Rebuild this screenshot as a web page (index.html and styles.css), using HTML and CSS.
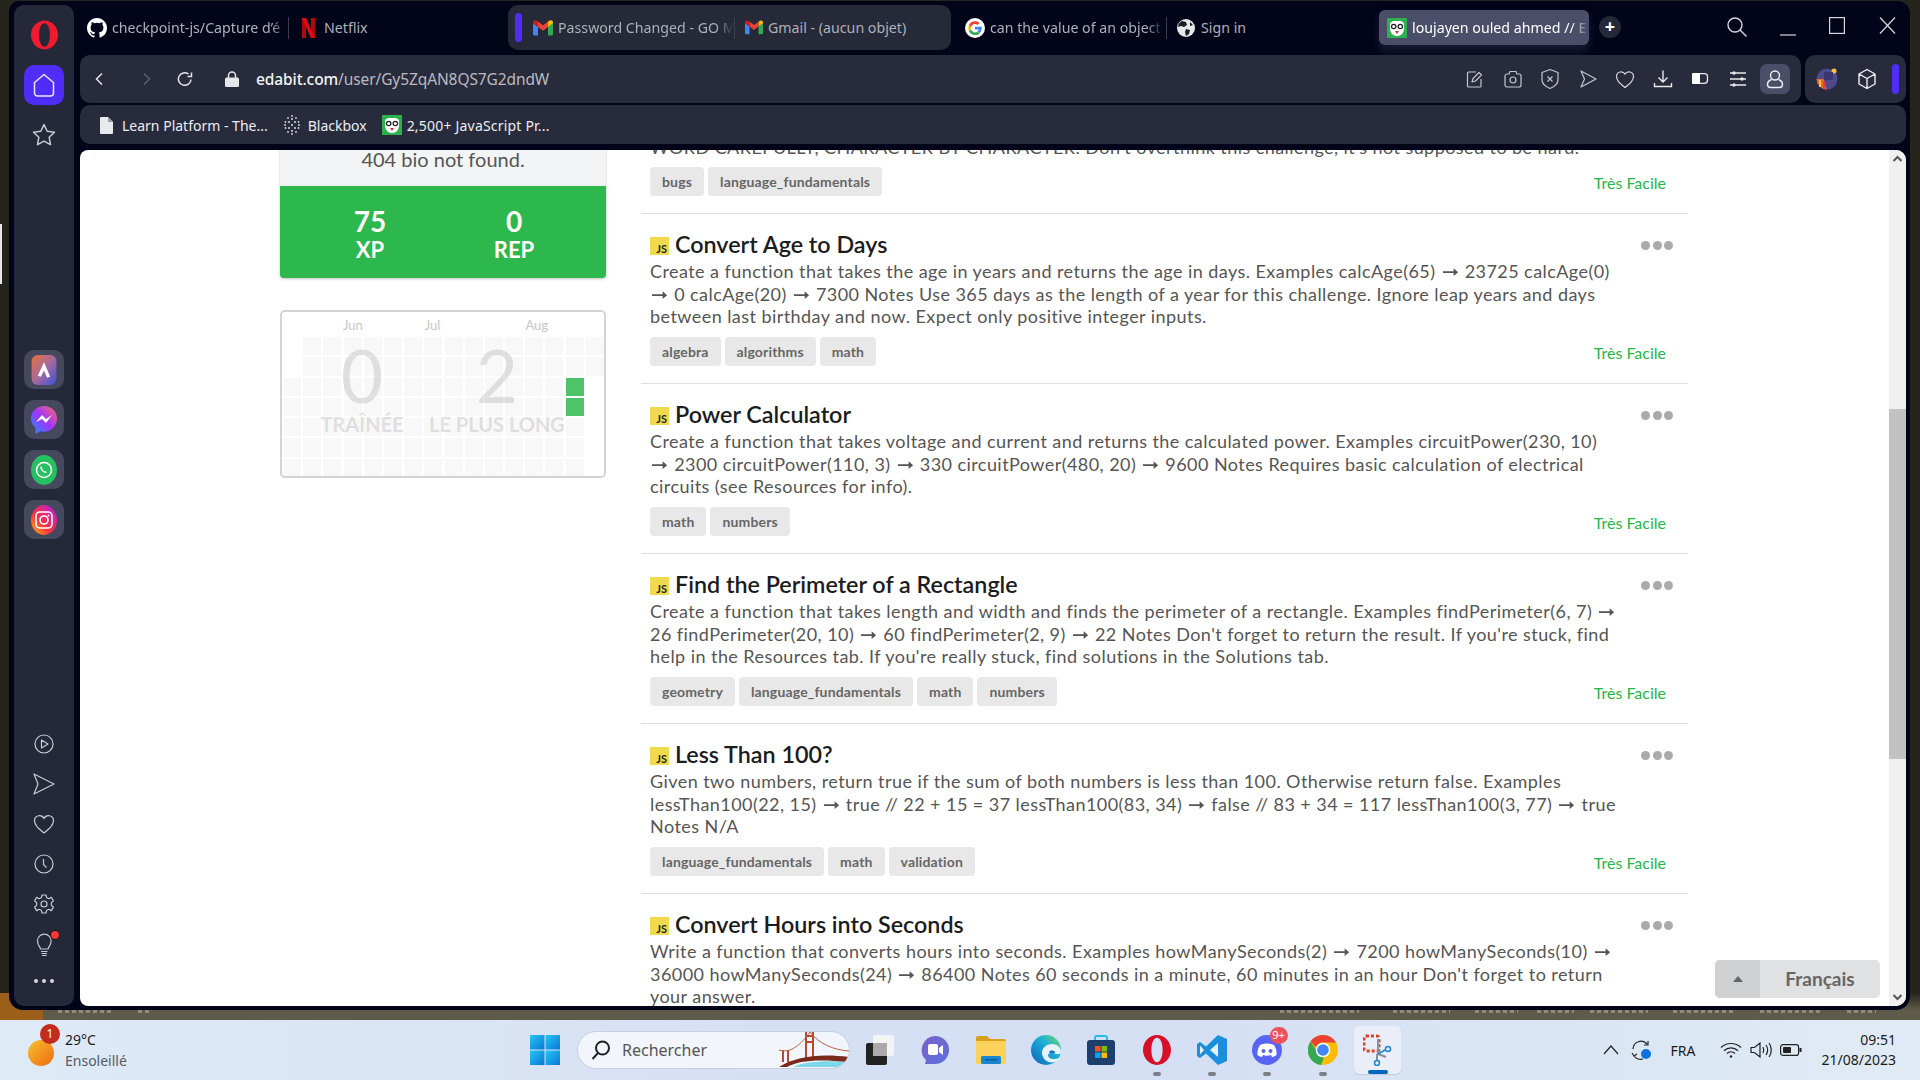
FILE: index.html
```html
<!DOCTYPE html>
<html lang="fr">
<head>
<meta charset="utf-8">
<title>loujayen ouled ahmed // Edabit</title>
<link rel="stylesheet" href="styles.css">
</head>
<body>
<svg class="sprite" width="0" height="0" aria-hidden="true">
  <defs>
    <symbol id="gmail" viewBox="0 0 20 16">
      <path d="M1.500 15.500H5V7L0 3.300V14a1.500 1.500 0 0 0 1.500 1.500z" fill="#4285f4"/>
      <path d="M15 15.500h3.500A1.500 1.500 0 0 0 20 14V3.300L15 7z" fill="#34a853"/>
      <path d="M15 1.500V7l5-3.700V2.300C20 .6 18 -.4 16.700.6z" fill="#fbbc04"/>
      <path d="M5 7V1.500l5 3.800 5-3.800V7l-5 3.800z" fill="#ea4335"/>
      <path d="M0 2.300v1L5 7V1.500L3.300.6C2 -.4 0 .6 0 2.300z" fill="#c5221f"/>
    </symbol>
    <symbol id="edabit" viewBox="0 0 20 20">
      <rect width="20" height="20" fill="#2bb24c"/>
      <path d="M3 5l3-2h8l3 2 0 5c0 5-3 8-7 8s-7-3-7-8z" fill="#fff"/>
      <circle cx="6.700" cy="8.500" r="2.800" fill="#222"/><circle cx="13.300" cy="8.500" r="2.800" fill="#222"/>
      <circle cx="6.700" cy="8.500" r="1.500" fill="#fff"/><circle cx="13.300" cy="8.500" r="1.500" fill="#fff"/>
      <path d="M8 13h4l-2 3z" fill="#c33"/>
    </symbol>
    <symbol id="opera" viewBox="0 0 30 32">
      <path fill-rule="evenodd" d="M15 0C6.700 0 0 7.200 0 16s6.700 16 15 16 15-7.200 15-16S23.300 0 15 0zm0 3c3.700 0 6 5.800 6 13s-2.300 13-6 13-6-5.800-6-13 2.300-13 6-13z"/>
    </symbol>
  </defs>
</svg>

<main class="desktop">
  <div class="wall-orange"></div>
  <div class="wall-marker"></div>
  <div class="status-left"><i></i><i></i></div>
  <div class="status-right"><i></i><i></i><i></i><i></i><i></i><i></i><i></i><i></i></div>

  <div class="window">
    <aside class="sidebar">
      <svg class="op-logo" width="27" height="30"><use href="#opera" fill="#f01a2e"/></svg>
      <div class="home"><svg width="26" height="26" viewBox="0 0 26 26" fill="none" stroke="#e8e8ff" stroke-width="1.500"><path d="M3.500 10.500 13 2.500l9.500 8V21a3 3 0 0 1-3 3h-13a3 3 0 0 1-3-3z" stroke-linejoin="round"/></svg></div>
      <svg class="star" width="28" height="28" viewBox="0 0 28 28" fill="none" stroke="#c8cad2" stroke-width="1.500" stroke-linejoin="round"><path d="M14 3.500l3.200 6.700 7.300 1-5.300 5.100 1.300 7.300-6.500-3.500-6.500 3.500 1.300-7.300L3.500 11.200l7.300-1z"/></svg>

      <div class="apps">
        <div class="app"><svg width="24" height="29" viewBox="0 0 24 29"><defs><linearGradient id="ar" x1="0" y1="0" x2="1" y2="1"><stop offset="0" stop-color="#e8703a"/><stop offset=".5" stop-color="#a56a9c"/><stop offset="1" stop-color="#3d4fe0"/></linearGradient></defs><rect width="24" height="29" rx="6" fill="url(#ar)"/><path d="M12 7l6 14-3 1-3-7-3 6-3-1z" fill="#fff"/></svg></div>
        <div class="app"><svg width="26" height="30" viewBox="0 0 26 30"><defs><linearGradient id="ms" x1="0" y1="1" x2="1" y2="0"><stop offset="0" stop-color="#1f8fff"/><stop offset=".5" stop-color="#a033ff"/><stop offset="1" stop-color="#ff6968"/></linearGradient></defs><path d="M13 1C6 1 0 6.500 0 13.500c0 3.700 1.700 7 4.400 9.200V29l5-2.700c1.200.3 2.400.5 3.600.5 7 0 13-5.900 13-13.300S20 1 13 1z" fill="url(#ms)"/><path d="M5 17l6-7 4 4 6-4-6 8-4-4z" fill="#fff"/></svg></div>
        <div class="app"><svg width="26" height="30" viewBox="0 0 26 30"><ellipse cx="13" cy="15" rx="13" ry="15" fill="#25c05f"/><circle cx="13" cy="15" r="7.500" fill="none" stroke="#fff" stroke-width="1.600"/><path d="M10 11c-1 1-1 3 1 5s4 2.500 5 1.500l-1.500-1.500-1 .5-2.500-2.500.5-1z" fill="#fff"/></svg></div>
        <div class="app"><svg width="26" height="30" viewBox="0 0 26 30"><defs><linearGradient id="ig" x1="0" y1="1" x2="1" y2="0"><stop offset="0" stop-color="#ffc107"/><stop offset=".4" stop-color="#f5333f"/><stop offset=".75" stop-color="#d6249f"/><stop offset="1" stop-color="#6a2ee8"/></linearGradient></defs><ellipse cx="13" cy="15" rx="13" ry="15" fill="url(#ig)"/><rect x="5" y="7" width="16" height="16" rx="4" fill="none" stroke="#fff" stroke-width="1.600"/><circle cx="13" cy="15" r="4" fill="none" stroke="#fff" stroke-width="1.600"/><circle cx="17.500" cy="10.500" r="1" fill="#fff"/></svg></div>
      </div>

      <div class="side-tools">
        <svg width="24" height="24" viewBox="0 0 24 24" fill="none" stroke="#c8cad2" stroke-width="1.200"><circle cx="12" cy="12" r="9"/><path d="M9.500 8l6.500 4-6.500 4z" stroke-linejoin="round"/></svg>
        <svg width="24" height="24" viewBox="0 0 24 24" fill="none" stroke="#c8cad2" stroke-width="1.200" stroke-linejoin="round"><path d="M2 2l20 10-20 10 4-10z"/></svg>
        <svg width="24" height="24" viewBox="0 0 24 24" fill="none" stroke="#c8cad2" stroke-width="1.200"><path d="M12 21C6 16 2.500 13 2.500 8.500A5 5 0 0 1 12 6.500 5 5 0 0 1 21.500 8.500C21.500 13 18 16 12 21z" stroke-linejoin="round"/></svg>
        <svg width="24" height="24" viewBox="0 0 24 24" fill="none" stroke="#c8cad2" stroke-width="1.200"><circle cx="12" cy="12" r="9"/><path d="M11.500 7v5.500l3 3"/></svg>
        <svg width="24" height="24" viewBox="0 0 24 24" fill="none" stroke="#c8cad2" stroke-width="1.200" stroke-linejoin="round"><circle cx="12" cy="12" r="3"/><path d="M10 3h4l.6 2.700 2.300 1 2.500-1.300 2 3.400-2 1.800v2.800l2 1.800-2 3.400-2.500-1.300-2.300 1L14 21h-4l-.6-2.700-2.300-1-2.500 1.300-2-3.400 2-1.800v-2.800l-2-1.800 2-3.400 2.500 1.300 2.300-1z"/></svg>
        <div class="bulb"><svg width="24" height="26" viewBox="0 0 24 26" fill="none" stroke="#c8cad2" stroke-width="1.200"><path d="M8.500 17c0-2-3-3.500-3-8a6.800 6.800 0 0 1 13.600 0c0 4.500-3 6-3 8z"/><path d="M9 19.500h6.500M9.500 21.500h5.500M10 23.500h4.500"/></svg><i class="bulb-dot"></i></div>
        <div class="more"><i></i><i></i><i></i></div>
      </div>
    </aside>

    <div class="browser">
      <div class="tabs">
        <div class="tab t-github">
          <svg width="20" height="20" viewBox="0 0 16 16" fill="#fff"><path d="M8 0C3.580 0 0 3.580 0 8c0 3.540 2.290 6.530 5.470 7.590.4.070.55-.17.55-.38v-1.340c-2.230.48-2.690-1.080-2.690-1.080-.36-.92-.89-1.170-.89-1.170-.73-.5.050-.49.050-.49.800.06 1.230.83 1.230.83.710 1.220 1.870.87 2.330.66.070-.52.280-.87.510-1.070-1.780-.2-3.640-.89-3.640-3.950 0-.87.310-1.590.820-2.150-.08-.2-.36-1.020.08-2.120 0 0 .67-.21 2.200.82a7.700 7.700 0 0 1 4 0c1.530-1.040 2.200-.82 2.200-.82.440 1.100.16 1.920.08 2.120.51.560.82 1.270.82 2.150 0 3.070-1.870 3.750-3.650 3.950.290.250.540.730.540 1.480v2.200c0 .21.150.46.550.38A8 8 0 0 0 16 8c0-4.420-3.580-8-8-8z"/></svg>
          <span class="tab-label">checkpoint-js/Capture d’é</span>
        </div>
        <div class="tab t-netflix">
          <svg width="13" height="20" viewBox="0 0 13 20"><path d="M0 0h4v20l-4 .5z" fill="#b1060f"/><path d="M9 0h4v20.500l-4-.5z" fill="#b1060f"/><path d="M0 0h4l9 20.500-4-.5z" fill="#e50914"/></svg>
          <span class="tab-label plain">Netflix</span>
        </div>
        <div class="group">
          <i class="group-bar"></i>
          <div class="tab t-gm1"><svg width="20" height="16"><use href="#gmail"/></svg><span class="tab-label">Password Changed - GO M</span></div>
          <div class="tab t-gm2"><svg width="18" height="15"><use href="#gmail"/></svg><span class="tab-label plain">Gmail - (aucun objet)</span></div>
        </div>
        <div class="tab t-google">
          <svg width="20" height="20" viewBox="0 0 48 48"><circle cx="24" cy="24" r="24" fill="#fff"/><path d="M40 24.500c0-1.200-.1-2.300-.3-3.300H24v6.400h9c-.4 2-1.600 3.800-3.300 5l5.300 4c3-2.900 5-7 5-12.100z" fill="#4285f4"/><path d="M24 41c4.500 0 8.200-1.500 11-4l-5.300-4.100c-1.500 1-3.400 1.600-5.700 1.600-4.300 0-8-2.900-9.300-6.900l-5.500 4.200C12 37.400 17.600 41 24 41z" fill="#34a853"/><path d="M14.700 27.600a10 10 0 0 1 0-6.300l-5.500-4.200a17 17 0 0 0 0 14.700z" fill="#fbbc04"/><path d="M24 14.400c2.400 0 4.600.8 6.300 2.500l4.700-4.700C32.200 9.500 28.400 8 24 8c-6.400 0-12 3.600-14.800 9.100l5.500 4.200c1.300-4 5-6.900 9.300-6.900z" fill="#ea4335"/></svg>
          <span class="tab-label">can the value of an object</span>
        </div>
        <div class="tab t-globe">
          <svg width="18" height="18" viewBox="0 0 18 18"><circle cx="9" cy="9" r="9" fill="#e8e8e8"/><path d="M5 2l4 1 1 3-3 2-3-1-3 1c0-3 2-5 4-6zM9 10l4 1-1 4-3 2-1-4zM13 3l3 3-3 1z" fill="#1a1c28"/></svg>
          <span class="tab-label plain">Sign in</span>
        </div>
        <div class="tab t-active"><svg width="20" height="20"><use href="#edabit"/></svg><span class="tab-label act">loujayen ouled ahmed // E</span></div>
        <div class="plus">+</div>
        <div class="win-controls">
          <svg class="w-search" width="22" height="22" viewBox="0 0 22 22" fill="none" stroke="#d8d8dc" stroke-width="1.400"><circle cx="9" cy="9" r="7"/><path d="M14 14l6.500 6.500"/></svg>
          <svg class="w-min" width="18" height="18" viewBox="0 0 18 18" stroke="#d8d8dc" stroke-width="1.200"><path d="M1 16h16"/></svg>
          <svg class="w-max" width="16" height="17" viewBox="0 0 16 17" fill="none" stroke="#d8d8dc" stroke-width="1.200"><rect x=".6" y=".6" width="14.800" height="15.800"/></svg>
          <svg class="w-close" width="17" height="17" viewBox="0 0 17 17" stroke="#d8d8dc" stroke-width="1.200"><path d="M1 .5l15 16M16 .5l-15 16"/></svg>
        </div>
      </div>

      <div class="toolbar">
        <div class="address">
          <svg class="a-back" width="16" height="16" viewBox="0 0 16 16" fill="none" stroke="#e4e4e8" stroke-width="1.500"><path d="M10 2.500L4.500 8l5.500 5.500"/></svg>
          <svg class="a-fwd" width="16" height="16" viewBox="0 0 16 16" fill="none" stroke="#5d606e" stroke-width="1.500"><path d="M6 2.500L11.500 8 6 13.500"/></svg>
          <svg class="a-rel" width="16" height="16" viewBox="0 0 16 16" fill="none" stroke="#e4e4e8" stroke-width="1.500"><path d="M14 8.500A6.300 6.300 0 1 1 11.500 3M14.500 1.500v4h-4" /></svg>
          <svg class="a-lock" width="14" height="16" viewBox="0 0 14 16"><rect y="6.500" width="14" height="9.500" rx="1.500" fill="#e6e7ea"/><path d="M3.500 7V4.500a3.500 3.500 0 0 1 7 0V7" fill="none" stroke="#e6e7ea" stroke-width="1.500"/></svg>
          <div class="url"><b>edabit.com</b>/user/Gy5ZqAN8QS7G2dndW</div>
          <div class="tools">
            <span class="tool"><svg width="22" height="22" viewBox="0 0 22 22" fill="none" stroke="#c3c5cc" stroke-width="1.200" stroke-linejoin="round"><path d="M12 4H4.500a1 1 0 0 0-1 1v13a1 1 0 0 0 1 1H16a1 1 0 0 0 1-1v-7"/><path d="M8 14l1-3.500 6-6 2.500 2.500-6 6z"/></svg></span>
            <span class="tool"><svg width="22" height="22" viewBox="0 0 22 22" fill="none" stroke="#c3c5cc" stroke-width="1.200"><path d="M3 8a2 2 0 0 1 2-2h2l1-2.500h6L15 6h2a2 2 0 0 1 2 2v9a2 2 0 0 1-2 2H5a2 2 0 0 1-2-2z"/><circle cx="11" cy="12" r="3"/></svg></span>
            <span class="tool"><svg width="22" height="22" viewBox="0 0 22 22" fill="none" stroke="#c3c5cc" stroke-width="1.200" stroke-linejoin="round"><path d="M11 1.500l8 3v7.500c0 4-3.500 6.500-8 8.500-4.500-2-8-4.500-8-8.500V4.500z"/><path d="M8.500 8.500l5 5M13.500 8.500l-5 5"/></svg></span>
            <span class="tool"><svg width="22" height="22" viewBox="0 0 22 22" fill="none" stroke="#c3c5cc" stroke-width="1.200" stroke-linejoin="round"><path d="M4 3l15 8-15 8 3.500-8z"/></svg></span>
            <span class="tool"><svg width="22" height="22" viewBox="0 0 22 22" fill="none" stroke="#d8d9de" stroke-width="1.200"><path d="M11 19.500C5.500 15 2.500 12.500 2.500 8.300A4.600 4.600 0 0 1 11 6a4.600 4.600 0 0 1 8.500 2.300c0 4.200-3 6.700-8.500 11.200z"/></svg></span>
            <span class="tool"><svg width="22" height="22" viewBox="0 0 22 22" fill="none" stroke="#e8e8ec" stroke-width="1.400"><path d="M11 2.500V14M6.500 9.500L11 14l4.500-4.500M2.500 15v3.500h17V15"/></svg></span>
            <span class="tool"><svg width="22" height="22" viewBox="0 0 22 22"><path d="M3 6a1 1 0 0 1 1-1h7v11H4a1 1 0 0 1-1-1z" fill="#fff"/><path d="M11 5.700h4.500a3 3 0 0 1 3 3v3.600a3 3 0 0 1-3 3H11" fill="none" stroke="#e8e8ec" stroke-width="1.300"/></svg></span>
            <span class="tool"><svg width="22" height="22" viewBox="0 0 22 22" stroke="#e8e8ec" stroke-width="1.400" fill="#e8e8ec"><path d="M3 5h16M3 11h16M3 17h16"/><circle cx="7" cy="5" r="1"/><circle cx="15" cy="11" r="1"/><circle cx="7" cy="17" r="1"/></svg></span>
            <span class="tool profile"><svg width="22" height="22" viewBox="0 0 22 22" fill="none" stroke="#f0f0f4" stroke-width="1.400"><circle cx="11" cy="7.500" r="4.500"/><path d="M7.500 11.500c-3 1-4 3-4 5a3 3 0 0 0 3 3h9a3 3 0 0 0 3-3c0-2-1-4-4-5"/></svg></span>
          </div>
        </div>
        <div class="ext">
          <svg class="e-game" width="22" height="22" viewBox="0 0 22 22"><circle cx="11" cy="11" r="10.500" fill="#4f4a8c"/><path d="M.6 11h7l3 10.800A11 11 0 0 1 .6 11z" fill="#ef6a2a"/><rect x="3" y="12" width="2" height="7" fill="#f9c23c"/><rect x="7" y="13" width="2" height="8" fill="#e43d3d"/><circle cx="18" cy="3" r="2.500" fill="#f5c83c"/><rect x="8" y="4" width="9" height="8" fill="#3b3670"/></svg>
          <svg class="e-cube" width="20" height="22" viewBox="0 0 20 22" fill="none" stroke="#f0f0f4" stroke-width="1.400" stroke-linejoin="round"><path d="M10 1.500l8 4.500v10l-8 4.500L2 16V6zM2 6l8 4.500L18 6M10 10.500v10"/></svg>
          <i class="e-bar"></i>
        </div>
      </div>

      <div class="bookmarks">
        <svg class="b-file" width="13" height="17" viewBox="0 0 13 17"><path d="M0 1a1 1 0 0 1 1-1h7l5 5v11a1 1 0 0 1-1 1H1a1 1 0 0 1-1-1z" fill="#e8eaee"/><path d="M8 0l5 5H8z" fill="#9a9da8"/></svg>
        <span class="b-text">Learn Platform - The...</span>
        <svg class="b-black" width="16" height="20" viewBox="0 0 16 20" fill="#d8d8dc"><circle cx="8" cy="1" r=".9"/><circle cx="4" cy="3" r=".9"/><circle cx="8" cy="4" r="1"/><circle cx="12" cy="3" r=".9"/><circle cx="1.500" cy="7" r=".9"/><circle cx="5" cy="7" r="1"/><circle cx="11" cy="7" r="1"/><circle cx="14.500" cy="7" r=".9"/><circle cx="1" cy="10" r=".9"/><circle cx="8" cy="10" r="1"/><circle cx="15" cy="10" r=".9"/><circle cx="1.500" cy="13" r=".9"/><circle cx="5" cy="13" r="1"/><circle cx="11" cy="13" r="1"/><circle cx="14.500" cy="13" r=".9"/><circle cx="4" cy="17" r=".9"/><circle cx="8" cy="16" r="1"/><circle cx="12" cy="17" r=".9"/><circle cx="8" cy="19" r=".9"/></svg>
        <span class="b-text">Blackbox</span>
        <svg class="b-ed" width="20" height="20"><use href="#edabit"/></svg>
        <span class="b-text">2,500+ JavaScript Pr...</span>
      </div>

      <div class="page">
        <div class="scroller">
          <div class="profile-col">
            <div class="bio">404 bio not found.</div>
            <div class="stats">
              <div class="stat"><b>75</b><b class="stat-l">XP</b></div>
              <div class="stat"><b>0</b><b class="stat-l">REP</b></div>
            </div>
            <div class="heat">
              <div class="months"><span class="m-jun">Jun</span><span class="m-jul">Jul</span><span class="m-aug">Aug</span></div>
              <div class="cells">
                <i class="e"></i><i></i><i></i><i></i><i></i><i></i><i></i><i></i><i></i><i></i><i></i><i></i><i></i><i></i><i></i><i></i>
                <i class="e"></i><i></i><i></i><i></i><i></i><i></i><i></i><i></i><i></i><i></i><i></i><i></i><i></i><i></i><i></i><i></i>
                <i></i><i></i><i></i><i></i><i></i><i></i><i></i><i></i><i></i><i></i><i></i><i></i><i></i><i></i><i class="g"></i><i class="e"></i>
                <i></i><i></i><i></i><i></i><i></i><i></i><i></i><i></i><i></i><i></i><i></i><i></i><i></i><i></i><i class="g"></i><i class="e"></i>
                <i></i><i></i><i></i><i></i><i></i><i></i><i></i><i></i><i></i><i></i><i></i><i></i><i></i><i></i><i></i><i class="e"></i>
                <i></i><i></i><i></i><i></i><i></i><i></i><i></i><i></i><i></i><i></i><i></i><i></i><i></i><i></i><i></i><i class="e"></i>
                <i></i><i></i><i></i><i></i><i></i><i></i><i></i><i></i><i></i><i></i><i></i><i></i><i></i><i></i><i></i><i class="e"></i>
              </div>
              <div class="streak">
                <div class="streak-c s1"><strong>0</strong><span>TRAÎNÉE</span></div>
                <div class="streak-c s2"><strong>2</strong><span>LE PLUS LONG</span></div>
              </div>
            </div>
          </div>

          <div class="list">
            <article class="item">
              <p class="desc">WORD CAREFULLY, CHARACTER BY CHARACTER. Don't overthink this challenge, it's not supposed to be hard.</p>
              <div class="foot"><div class="tags"><span>bugs</span><span>language_fundamentals</span></div><span class="level">Très Facile</span></div>
            </article>
            <article class="item">
              <header class="head"><span class="js">JS</span><h3>Convert Age to Days</h3><span class="dots"><i></i><i></i><i></i></span></header>
              <p class="desc">Create a function that takes the age in years and returns the age in days. Examples calcAge(65) <span class="ar">➞</span> 23725 calcAge(0) <span class="ar">➞</span> 0 calcAge(20) <span class="ar">➞</span> 7300 Notes Use 365 days as the length of a year for this challenge. Ignore leap years and days between last birthday and now. Expect only positive integer inputs.</p>
              <div class="foot"><div class="tags"><span>algebra</span><span>algorithms</span><span>math</span></div><span class="level">Très Facile</span></div>
            </article>
            <article class="item">
              <header class="head"><span class="js">JS</span><h3>Power Calculator</h3><span class="dots"><i></i><i></i><i></i></span></header>
              <p class="desc">Create a function that takes voltage and current and returns the calculated power. Examples circuitPower(230, 10) <span class="ar">➞</span> 2300 circuitPower(110, 3) <span class="ar">➞</span> 330 circuitPower(480, 20) <span class="ar">➞</span> 9600 Notes Requires basic calculation of electrical circuits (see Resources for info).</p>
              <div class="foot"><div class="tags"><span>math</span><span>numbers</span></div><span class="level">Très Facile</span></div>
            </article>
            <article class="item">
              <header class="head"><span class="js">JS</span><h3>Find the Perimeter of a Rectangle</h3><span class="dots"><i></i><i></i><i></i></span></header>
              <p class="desc">Create a function that takes length and width and finds the perimeter of a rectangle. Examples findPerimeter(6, 7) <span class="ar">➞</span> 26 findPerimeter(20, 10) <span class="ar">➞</span> 60 findPerimeter(2, 9) <span class="ar">➞</span> 22 Notes Don't forget to return the result. If you're stuck, find help in the Resources tab. If you're really stuck, find solutions in the Solutions tab.</p>
              <div class="foot"><div class="tags"><span>geometry</span><span>language_fundamentals</span><span>math</span><span>numbers</span></div><span class="level">Très Facile</span></div>
            </article>
            <article class="item">
              <header class="head"><span class="js">JS</span><h3>Less Than 100?</h3><span class="dots"><i></i><i></i><i></i></span></header>
              <p class="desc">Given two numbers, return true if the sum of both numbers is less than 100. Otherwise return false. Examples lessThan100(22, 15) <span class="ar">➞</span> true // 22 + 15 = 37 lessThan100(83, 34) <span class="ar">➞</span> false // 83 + 34 = 117 lessThan100(3, 77) <span class="ar">➞</span> true Notes N/A</p>
              <div class="foot"><div class="tags"><span>language_fundamentals</span><span>math</span><span>validation</span></div><span class="level">Très Facile</span></div>
            </article>
            <article class="item">
              <header class="head"><span class="js">JS</span><h3>Convert Hours into Seconds</h3><span class="dots"><i></i><i></i><i></i></span></header>
              <p class="desc">Write a function that converts hours into seconds. Examples howManySeconds(2) <span class="ar">➞</span> 7200 howManySeconds(10) <span class="ar">➞</span> 36000 howManySeconds(24) <span class="ar">➞</span> 86400 Notes 60 seconds in a minute, 60 minutes in an hour Don't forget to return your answer.</p>
            </article>
          </div>

          <div class="lang"><span class="lang-arrow"><i></i></span><span class="lang-name">Français</span></div>
        </div>
        <div class="scrollbar">
          <svg width="11" height="7" viewBox="0 0 11 7" fill="none" stroke="#555" stroke-width="2"><path d="M1.500 6l4-4 4 4"/></svg>
          <div class="thumb"></div>
          <svg width="11" height="7" viewBox="0 0 11 7" fill="none" stroke="#555" stroke-width="2"><path d="M1.500 1l4 4 4-4"/></svg>
        </div>
      </div>
    </div>
  </div>
</main>

<footer class="taskbar">
  <div class="weather">
    <div class="sun"><span class="sun-badge">1</span></div>
    <div class="w-text"><span class="w-temp">29°C</span><span class="w-desc">Ensoleillé</span></div>
  </div>
  <svg class="start" width="30" height="30" viewBox="0 0 30 30"><defs><linearGradient id="wn" x1="0" y1="0" x2="1" y2="1"><stop offset="0" stop-color="#28c5f5"/><stop offset="1" stop-color="#0878d4"/></linearGradient></defs><rect width="14.500" height="14.500" fill="url(#wn)"/><rect x="15.500" width="14.500" height="14.500" fill="url(#wn)"/><rect y="15.500" width="14.500" height="14.500" fill="url(#wn)"/><rect x="15.500" y="15.500" width="14.500" height="14.500" fill="url(#wn)"/></svg>
  <div class="search">
    <svg width="22" height="22" viewBox="0 0 22 22" fill="none" stroke="#222" stroke-width="2"><circle cx="12.500" cy="9" r="6.500"/><path d="M8 14l-5.500 6"/></svg>
    <span>Rechercher</span>
    <svg class="bridge" width="70" height="38" viewBox="0 0 70 38"><path d="M26 0h2v30h-2zM33 0h2v30h-2zM26 5h9v2h-9zM26 11h9v2h-9zM3 20h2v12H3zM8 20h2v12H8z" fill="#b84a2c"/><path d="M0 20C12 24 22 14 31 2 40 14 55 20 70 21" fill="none" stroke="#b5603f"/><path d="M14 37c10-5 30-7 56-5v5z" fill="#7ed6ea"/><path d="M0 37C15 27 40 23 70 27v5C40 29 20 30 8 37z" fill="#7a2a1c"/></svg>
  </div>
  <div class="tb-icons">
    <div class="tbi"><svg width="30" height="30" viewBox="0 0 30 30"><rect x="8" y="0" width="21" height="21" rx="2" fill="#f4f4f4"/><rect x="1" y="8" width="21" height="22" rx="2" fill="#222"/><rect x="8" y="8" width="14" height="13" fill="#aaa"/></svg></div>
    <div class="tbi"><svg width="28" height="30" viewBox="0 0 28 30"><defs><linearGradient id="mt" x1="0" y1="0" x2="1" y2="1"><stop offset="0" stop-color="#7c62c9"/><stop offset="1" stop-color="#5b6ee0"/></linearGradient></defs><path d="M14 1a14 14 0 0 1 0 28H4l1-4A14 14 0 0 1 14 1z" fill="url(#mt)"/><rect x="7" y="9" width="10" height="11" rx="2" fill="#fff"/><path d="M18 13l4-3v10l-4-3z" fill="#fff"/></svg></div>
    <div class="tbi"><svg width="30" height="28" viewBox="0 0 30 28"><path d="M0 2a2 2 0 0 1 2-2h9l3 3h14a2 2 0 0 1 2 2v4H0z" fill="#d9a11b"/><rect y="5" width="30" height="23" rx="1" fill="#fcd25a"/><rect x="5" y="20" width="20" height="8" rx="1.500" fill="#1a86d0"/><rect x="9" y="23" width="12" height="1.500" fill="#0b5c9c"/></svg></div>
    <div class="tbi"><svg width="30" height="30" viewBox="0 0 30 30"><defs><linearGradient id="eg" x1="0" y1="1" x2="1" y2="0"><stop offset="0" stop-color="#0b62b8"/><stop offset=".6" stop-color="#1fb0d8"/><stop offset="1" stop-color="#6fdc5a"/></linearGradient></defs><circle cx="15" cy="15" r="15" fill="url(#eg)"/><path d="M30 17c0-5-4-8-9-8-6 0-10 4-10 9 0 6 6 11 13 9 3-1 5-3 5-5-2 2-5 2-7 2-3 0-5-2-5-4 0-1 1-2 3-2 3 0 10 3 10-1z" fill="#e6f2fb"/><path d="M18 17c1-2 5-2 6 0s-5 2-6 0z" fill="#1574c4"/></svg></div>
    <div class="tbi"><svg width="28" height="30" viewBox="0 0 28 30"><path d="M8 6V3a2 2 0 0 1 2-2h8a2 2 0 0 1 2 2v3" fill="none" stroke="#2db9e8" stroke-width="2"/><rect y="5" width="28" height="25" rx="3" fill="#1c3f6e"/><rect x="8" y="11" width="5.500" height="5.500" fill="#f25022"/><rect x="14.500" y="11" width="5.500" height="5.500" fill="#7fba00"/><rect x="8" y="17.500" width="5.500" height="5.500" fill="#00a4ef"/><rect x="14.500" y="17.500" width="5.500" height="5.500" fill="#ffb900"/></svg></div>
    <div class="tbi run"><svg width="28" height="30"><use href="#opera" fill="#d7102a"/></svg></div>
    <div class="tbi run"><svg width="30" height="30" viewBox="0 0 30 30"><path d="M21 0l9 4v22l-9 4-12-11.500L3 23 0 21v-12l3-2 6 4.500z" fill="#1b8fdc"/><path d="M21 8l-8 7 8 7z" fill="#e6f2fb"/><path d="M3 10.500l4 4.500-4 4.500z" fill="#e6f2fb"/></svg></div>
    <div class="tbi run"><svg width="30" height="30" viewBox="0 0 30 30"><circle cx="15" cy="15" r="15" fill="#5865f2"/><path d="M8 10c4-2 10-2 14 0 2 3 3 7 2.500 10-2 1.500-3.500 2-4.500 2l-1-2c-3 1-5 1-8 0l-1 2c-1 0-2.500-.5-4.500-2C5 17 6 13 8 10z" fill="#fff"/><circle cx="11.500" cy="16" r="2" fill="#5865f2"/><circle cx="18.500" cy="16" r="2" fill="#5865f2"/></svg><span class="discord-badge">9+</span></div>
    <div class="tbi run"><svg width="30" height="30" viewBox="0 0 30 30"><circle cx="15" cy="15" r="15" fill="#fbbc04"/><path d="M15 0a15 15 0 0 1 13 7.500H15a7.500 7.500 0 0 0-7 4.700L2.500 6.500A15 15 0 0 1 15 0z" fill="#ea4335"/><path d="M2.500 6.500L8 15a7.500 7.500 0 0 0 8 7.400L13 30A15 15 0 0 1 2.500 6.500z" fill="#34a853"/><circle cx="15" cy="15" r="7.300" fill="#fff"/><circle cx="15" cy="15" r="5.800" fill="#4285f4"/></svg></div>
    <div class="tbi snip"><svg width="30" height="32" viewBox="0 0 30 32" fill="none"><rect x="1" y="2" width="15" height="15" rx="2" stroke="#d9432a" stroke-width="3" stroke-dasharray="3 2"/><path d="M15 5v15l8 3" stroke="#8a8f9a" stroke-width="2"/><path d="M15 20l7-4" stroke="#1a86d0" stroke-width="1.500"/><circle cx="25" cy="15" r="2.500" stroke="#1a86d0" stroke-width="1.500"/><path d="M14 20v6" stroke="#8a8f9a" stroke-width="2"/><circle cx="14" cy="29" r="2.500" stroke="#1a86d0" stroke-width="1.500"/></svg></div>
  </div>
  <div class="tray">
    <span class="tr w30"><svg width="16" height="10" viewBox="0 0 16 10" fill="none" stroke="#222" stroke-width="1.200"><path d="M1 9l7-8 7 8"/></svg></span>
    <span class="tr w30"><svg width="22" height="22" viewBox="0 0 22 22" fill="none" stroke="#222" stroke-width="1.200"><path d="M3 10a8 8 0 0 1 14-5M18 2v4h-4M4 17c2 3 6 4 9 3M2 14l2 3 3-2"/><circle cx="16" cy="15" r="5" fill="#0a74da" stroke="none"/></svg></span>
    <span class="tr fra">FRA</span>
    <span class="tr w30 wifi"><svg width="22" height="16" viewBox="0 0 22 16" fill="none" stroke="#222" stroke-width="1.200"><path d="M1 5.500a14.500 14.500 0 0 1 20 0M4 8.700a10 10 0 0 1 14 0M7 11.500a5.500 5.500 0 0 1 8 0"/><circle cx="11" cy="14.500" r="1.200" fill="#222" stroke="none"/></svg></span>
    <span class="tr w30"><svg width="22" height="18" viewBox="0 0 22 18" fill="none" stroke="#222" stroke-width="1.200"><path d="M1 6.500h3.500L10 2v14l-5.500-4.500H1zM13 6c1 2 1 4 0 6M16 4c2 3 2 7 0 10M19 2c3 4 3 10 0 14"/></svg></span>
    <span class="tr w30"><svg width="22" height="12" viewBox="0 0 22 12"><rect x=".6" y=".6" width="18" height="10.800" rx="2.500" fill="none" stroke="#222" stroke-width="1.200"/><rect x="3" y="3" width="8" height="6" rx="1" fill="#222"/><rect x="19.500" y="4" width="2" height="4" fill="#222"/></svg></span>
    <div class="clock"><span>09:51</span><span>21/08/2023</span></div>
  </div>
</footer>
</body>
</html>
```

FILE: styles.css
```css
* { box-sizing: border-box; }
html, body { margin: 0; height: 100%; }
body {
  width: 1920px; height: 1080px; overflow: hidden;
  font-family: "Noto Sans", sans-serif;
  background: #5f5b4b;
}
.sprite { position: absolute; }
i { display: block; font-style: normal; }

/* Desktop wallpaper and window */
.desktop {
  position: relative; height: 1020px;
  padding: 1px 10px 10px 9px;
  background: linear-gradient(#25251d 0, #25251d 993px, #5f5b4b 1010px);
  overflow: hidden;
}
.desktop::after {
  content: ""; position: absolute; left: 0; right: 0; bottom: 0; height: 10px;
  background: #5f5b4b; z-index: 0;
}
.wall-orange { position: absolute; left: 0; bottom: 0; width: 43px; height: 27px; background: #9c5f1a; z-index: 1; }
.wall-marker { position: absolute; left: 0; top: 224px; width: 2px; height: 60px; background: #e8e8e8; z-index: 2; }
/* Illegible scraps of a status bar peeking out below the window */
.status-left, .status-right { position: absolute; top: 1010px; height: 3px; z-index: 1; display: grid; }
.status-left { left: 58px; grid-template-columns: 80px 20px; }
.status-right { left: 1280px; grid-template-columns: 113px 82px 62px 53px 83px 87px 87px 41px; }
.status-left i, .status-right i {
  width: 70%; background: repeating-linear-gradient(90deg, #c9c7b8 0 4px, transparent 4px 7px); opacity: .45;
}

.window {
  position: relative; z-index: 3;
  height: 1009px; display: flex; gap: 6px;
  padding: 4px 4px 4px 5px;
  background: #02041a; border-radius: 10px 12px 14px 14px;
}

/* Sidebar */
.sidebar {
  width: 60px; flex: none; display: flex; flex-direction: column; align-items: center;
  padding: 15px 0 13px; background: #242838; border-radius: 10px;
}
.op-logo { display: block; }
.home {
  width: 40px; height: 40px; margin-top: 15px; display: flex; align-items: center; justify-content: center;
  background: #4f2cf7; border-radius: 10px;
}
.star { margin-top: 16px; }
.apps { margin-top: 201px; display: flex; flex-direction: column; gap: 11px; }
.app {
  width: 40px; height: 39px; display: flex; align-items: center; justify-content: center;
  background: #46485e; border-radius: 10px;
}
.app svg { width: 26px; height: 30px; }
.side-tools { margin-top: auto; display: flex; flex-direction: column; align-items: center; gap: 16px; }
.side-tools > svg { display: block; }
.bulb { position: relative; height: 24px; }
.bulb svg { display: block; }
.bulb-dot {
  position: absolute; right: -4px; top: -2px; width: 10px; height: 10px; border-radius: 50%;
  background: #ff3535; border: 1px solid #111;
}
.more { height: 24px; margin-top: -3px; display: flex; gap: 4px; align-items: center; }
.more i { width: 4px; height: 4px; border-radius: 50%; background: #d8d8dc; }

/* Browser column */
.browser { flex: 1; min-width: 0; display: flex; flex-direction: column; }

.tabs { height: 50px; flex: none; display: flex; align-items: flex-start; color: #aeb0b8; font-size: 14.200px; }
.tab { height: 45px; display: flex; align-items: center; flex: none; }
.tab-label {
  flex: 1; min-width: 0; white-space: nowrap; overflow: hidden; margin-left: 5px;
  -webkit-mask-image: linear-gradient(90deg, #000 90%, transparent 100%);
          mask-image: linear-gradient(90deg, #000 90%, transparent 100%);
}
.tab-label.plain { -webkit-mask-image: none; mask-image: none; }
.t-github { margin-left: 7px; width: 202px; position: relative; }
.t-github::after, .t-google::after, .t-gm1::after {
  content: ""; position: absolute; right: 0; top: 12px; height: 22px; width: 1px; background: #3c3e4c;
}
.t-netflix { width: 219px; padding-left: 13px; }
.t-netflix .tab-label { margin-left: 9px; }
.group {
  width: 443px; height: 45px; flex: none; display: flex; align-items: center;
  padding-left: 7px; background: #252938; border-radius: 10px;
}
.group-bar { width: 7px; height: 29px; background: #4f2cf7; border-radius: 4px; }
.t-gm1 { width: 213px; padding: 0 1px 0 11px; position: relative; }
.t-gm2 { margin-left: 10px; width: 175px; }
.t-google { width: 216px; padding: 0 3px 0 14px; position: relative; }
.t-globe { width: 212px; padding-left: 10px; }
.t-globe .tab-label { margin-left: 6px; }
.t-active {
  margin-top: 5px; width: 210px; height: 35px; padding: 0 0 0 8px; color: #fff;
  background: #4b4e68; border-radius: 6px; box-shadow: 0 6px 10px rgba(70, 72, 100, .35);
}
.plus {
  margin: 11px 0 0 10px; width: 22px; height: 22px; border-radius: 50%;
  background: #242838; color: #fff; font: 700 18px/21px "Noto Sans", sans-serif; text-align: center;
}
.win-controls { margin-left: auto; padding: 5px 10px 0 0; display: flex; align-items: flex-start; }
.win-controls svg { display: block; }
.w-search { margin-top: 6px; }
.w-min { margin: 9px 0 0 31px; }
.w-max { margin: 7px 0 0 32px; }
.w-close { margin: 7px 0 0 34px; }

.toolbar { height: 48px; flex: none; display: flex; gap: 4px; }
.address {
  flex: 1; min-width: 0; display: flex; align-items: center; padding: 0 11px 0 12px;
  background: #282b3b; border-radius: 10px;
}
.address > svg { flex: none; }
.a-fwd { margin-left: 30px; }
.a-rel { margin-left: 23px; }
.a-lock { margin-left: 32px; }
.url { margin-left: 17px; font-size: 15.500px; color: #b9bac2; letter-spacing: -.1px; }
.url b { font-weight: 500; color: #f4f4f6; }
.tools { margin-left: auto; display: flex; gap: 7.500px; align-items: center; }
.tool { width: 30px; height: 30px; display: flex; align-items: center; justify-content: center; }
.profile { background: #4b4e68; border-radius: 7px; }
.ext {
  width: 101px; flex: none; display: flex; align-items: center; padding-left: 11px;
  background: #282b3b; border-radius: 10px;
}
.e-cube { margin-left: 19px; }
.e-bar { margin-left: 15px; width: 7px; height: 30px; background: #4f2cf7; border-radius: 4px; }

.bookmarks {
  height: 39px; flex: none; margin-top: 2px; display: flex; align-items: center; padding: 1px 0 0 20px;
  background: #282b3b; border-radius: 10px; color: #eceef2; font-size: 14px;
}
.bookmarks svg { flex: none; }
.b-text { margin-left: 8px; white-space: nowrap; }
.b-file + .b-text { margin-left: 9px; }
.b-black { margin-left: 16px; }
.b-ed { margin-left: 15px; }
.b-ed + .b-text { margin-left: 5px; letter-spacing: .2px; }

/* Page */
.page {
  flex: 1; min-height: 0; margin-top: 6px; display: flex; background: #fff;
  border-radius: 8px 10px 10px 8px; overflow: hidden;
}
.scroller {
  position: relative; flex: 1; min-width: 0; overflow: hidden; display: flex;
  padding-left: 200px; gap: 35px;
  font-family: Lato, "DejaVu Sans", sans-serif;
}
.scrollbar {
  width: 17px; flex: none; background: #f0f0f0; display: flex; flex-direction: column; align-items: center;
  padding: 5px 0;
}
.thumb { align-self: stretch; height: 350px; margin: 247px 0 auto; background: #c1c1c1; }

.profile-col { width: 326px; flex: none; }
.bio {
  height: 36px; text-align: center; color: #555; font-size: 20px; line-height: 18px;
  background: #f3f4f5; box-shadow: 0 0 2px rgba(0, 0, 0, .25);
}
.stats {
  height: 92px; display: grid; grid-template-columns: 144px 144px; padding: 0 20px 0 18px;
  background: #2db84d; color: #fff; border-radius: 0 0 4px 4px; box-shadow: 0 1px 3px rgba(0, 0, 0, .25);
}
.stat { display: flex; flex-direction: column; align-items: center; padding-top: 19px; }
.stat b { font-size: 28px; line-height: 32px; }
.stat b.stat-l { font-size: 22px; line-height: 26px; }

.heat {
  position: relative; margin-top: 32px; height: 168px; border: 2px solid #d4d4d4; border-radius: 5px;
  overflow: hidden;
}
.months { height: 25px; display: flex; font-size: 13px; line-height: 26px; color: #c6c6c6; }
.m-jun { margin-left: 61px; }
.m-jul { margin-left: 62px; }
.m-aug { margin-left: 85px; }
.cells { display: grid; grid-template-columns: repeat(16, 18px); grid-auto-rows: 18.300px; gap: 2px 2.200px; margin-left: 1px; }
.cells i { background: #f8f8f8; }
.cells i.e { background: transparent; }
.cells i.g { background: #4cc467; }
.streak { position: absolute; inset: 0; }
.streak-c {
  position: absolute; top: 28px; width: 140px; display: flex; flex-direction: column; align-items: center;
  color: rgba(180, 180, 180, .38); white-space: nowrap;
}
.streak-c strong { font-size: 73px; line-height: 70px; font-weight: 400; }
.streak-c span { margin-top: 1px; font-size: 20px; line-height: 26px; font-weight: 700; }
.s1 { left: 10px; }
.s2 { left: 145px; }

.list { flex: 1; min-width: 0; max-width: 1047px; margin-top: -14px; }
.item { padding: 0 9px 17.300px; border-bottom: 1px solid #dedede; }
.item + .item { padding-top: 18px; }
.head { display: flex; align-items: center; height: 25px; margin-bottom: 3px; }
.js {
  width: 19px; height: 18px; margin: 2px 6px 0 0; display: flex; align-items: flex-end; justify-content: flex-end;
  padding: 0 2px 0 0; background: #f0db4f; color: #222; font-size: 11px; line-height: 12px; font-weight: 700;
}
.head h3 { margin: 0; flex: 1; font-size: 23.300px; line-height: 25px; font-weight: 600; color: #1b1c1d; }
.dots { margin: 1px 6px 0 0; display: flex; gap: 2.500px; }
.dots i { width: 9px; height: 9px; border-radius: 50%; background: #aaa; }
.desc { margin: 0; width: 970px; font-size: 18px; line-height: 22.400px; letter-spacing: .44px; color: #555; }
.ar { display: inline-block; margin: 0 2px; line-height: 18px; letter-spacing: 0; transform: scaleX(1.15); }
.foot { margin-top: 9.500px; display: flex; justify-content: space-between; align-items: flex-end; }
.item:first-child .foot { margin-top: 8.500px; }
.tags { display: flex; gap: 4px; }
.tags span {
  height: 29px; padding: 0 12px; border-radius: 4px; background: #e8e8e8; color: #666;
  font-size: 14px; line-height: 29px; font-weight: 700; letter-spacing: .15px;
}
.level { margin: 0 13px 1px 0; font-size: 16px; line-height: 24px; color: #21ba45; }

.lang {
  position: absolute; right: 9px; bottom: 8px; width: 165px; height: 38px; display: flex;
  border-radius: 5px; overflow: hidden; background: #e0e1e2;
}
.lang-arrow { width: 45px; display: flex; align-items: center; justify-content: center; background: #cfd0d1; }
.lang-arrow i { width: 0; height: 0; border: 5.500px solid transparent; border-top: 0; border-bottom: 6px solid #666; }
.lang-name { flex: 1; text-align: center; color: #666; font-size: 19px; line-height: 38px; font-weight: 700; }

/* Taskbar */
.taskbar {
  height: 60px; display: flex; align-items: center;
  background: linear-gradient(90deg, #deeaf6 0, #d6e0f3 40%, #d4dff4 60%, #e0ebf5 100%);
  color: #1b1b1b;
}
.weather { width: 530px; flex: none; padding-left: 28px; display: flex; align-items: center; gap: 11px; }
.sun {
  position: relative; width: 26px; height: 26px; margin-top: 5px; border-radius: 50%;
  background: linear-gradient(135deg, #f4c22b, #f06a14);
}
.sun-badge {
  position: absolute; left: 12px; top: -16px; width: 20px; height: 20px; border-radius: 50%;
  background: #c42b1c; color: #fff; font-size: 12px; line-height: 20px; text-align: center;
}
.w-text { display: flex; flex-direction: column; font-size: 14px; line-height: 21px; }
.w-desc { color: #555b66; }
.start { flex: none; }
.search {
  width: 273px; height: 38px; margin-left: 17px; flex: none; display: flex; align-items: center;
  padding-left: 12px; background: #f2f5fc; border: 1px solid #c6cfe0; border-radius: 19px; overflow: hidden;
  font-size: 16px; color: #555;
}
.search span { margin-left: 10px; }
.bridge { margin-left: auto; align-self: flex-end; }
.tb-icons { margin-left: 2.500px; display: flex; }
.tbi {
  position: relative; width: 55.300px; height: 48px; display: flex; align-items: center; justify-content: center;
}
.run::after, .snip::after {
  content: ""; position: absolute; bottom: -2px; left: 50%; width: 8px; height: 4px; margin-left: -4px;
  border-radius: 2px; background: #7b7f88;
}
.snip {
  width: 47px; margin-left: 4px; background: #e9eef8; border-radius: 5px;
  box-shadow: 0 1px 1px rgba(0, 0, 0, .12);
}
.snip::after { width: 20px; margin-left: -10px; bottom: 0; background: #0067c0; }
.discord-badge {
  position: absolute; left: 30px; top: 1px; width: 18px; height: 17px; border-radius: 9px;
  background: #e8555a; color: #fff; font-size: 11px; line-height: 16px; text-align: center;
}
.tray { margin-left: auto; margin-right: 24px; width: 300px; display: flex; align-items: center; font-size: 14px; }
.tr { display: flex; align-items: center; justify-content: center; }
.w30 { width: 30px; }
.fra { width: 54px; }
.wifi { margin-left: 6px; }
.clock { margin-left: auto; display: flex; flex-direction: column; align-items: flex-end; line-height: 20px; }
```
